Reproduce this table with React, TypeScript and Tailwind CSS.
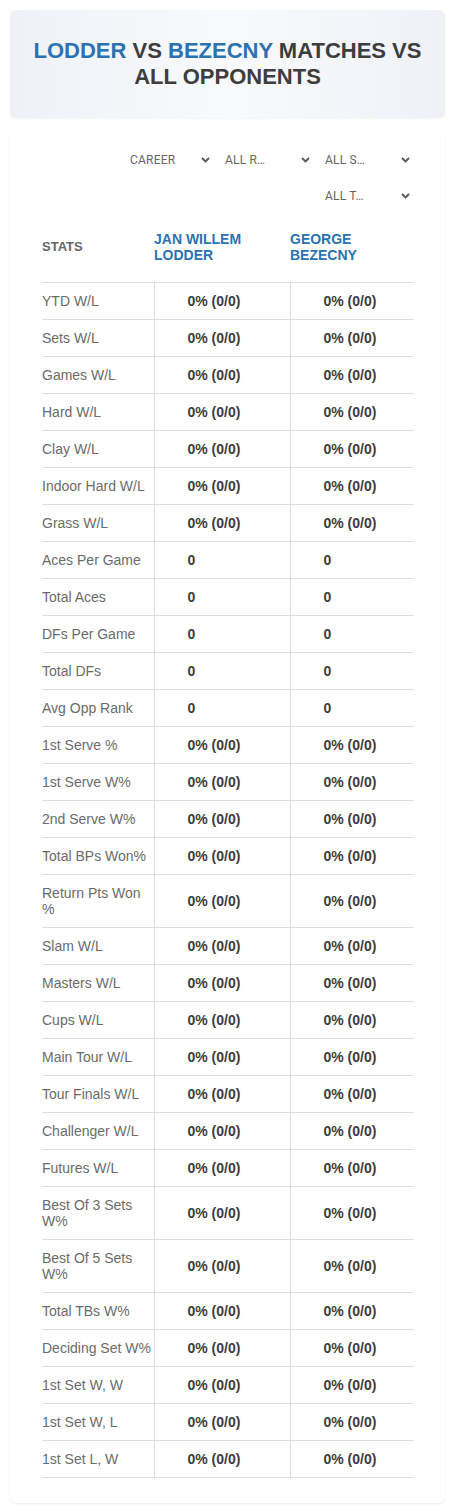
const rows: { label: string; value: string }[] = [
    { label: "YTD W/L", value: "0% (0/0)" },
    { label: "Sets W/L", value: "0% (0/0)" },
    { label: "Games W/L", value: "0% (0/0)" },
    { label: "Hard W/L", value: "0% (0/0)" },
    { label: "Clay W/L", value: "0% (0/0)" },
    { label: "Indoor Hard W/L", value: "0% (0/0)" },
    { label: "Grass W/L", value: "0% (0/0)" },
    { label: "Aces Per Game", value: "0" },
    { label: "Total Aces", value: "0" },
    { label: "DFs Per Game", value: "0" },
    { label: "Total DFs", value: "0" },
    { label: "Avg Opp Rank", value: "0" },
    { label: "1st Serve %", value: "0% (0/0)" },
    { label: "1st Serve W%", value: "0% (0/0)" },
    { label: "2nd Serve W%", value: "0% (0/0)" },
    { label: "Total BPs Won%", value: "0% (0/0)" },
    { label: "Return Pts Won %", value: "0% (0/0)" },
    { label: "Slam W/L", value: "0% (0/0)" },
    { label: "Masters W/L", value: "0% (0/0)" },
    { label: "Cups W/L", value: "0% (0/0)" },
    { label: "Main Tour W/L", value: "0% (0/0)" },
    { label: "Tour Finals W/L", value: "0% (0/0)" },
    { label: "Challenger W/L", value: "0% (0/0)" },
    { label: "Futures W/L", value: "0% (0/0)" },
    { label: "Best Of 3 Sets W%", value: "0% (0/0)" },
    { label: "Best Of 5 Sets W%", value: "0% (0/0)" },
    { label: "Total TBs W%", value: "0% (0/0)" },
    { label: "Deciding Set W%", value: "0% (0/0)" },
    { label: "1st Set W, W", value: "0% (0/0)" },
    { label: "1st Set W, L", value: "0% (0/0)" },
    { label: "1st Set L, W", value: "0% (0/0)" },
];

const Chevron = () => (
    <svg width="9" height="6" viewBox="0 0 9 6" className="shrink-0">
        <path d="M1 1 L4.5 4.5 L8 1" fill="none" stroke="#555" strokeWidth="1.8" />
    </svg>
);

const FilterSelect = ({ text, first }: { text: string; first?: boolean }) => (
    <div
        className={`h-[30px] flex items-center justify-between pl-[12px] pr-[3px] ${first ? "w-[95px]" : "w-[100px]"}`}
    >
        <span className="text-[12px] text-[#666] whitespace-nowrap tracking-[0.2px]">{text}</span>
        <Chevron />
    </div>
);

export default function App() {
    return (
        <div className="min-h-[1512px] bg-white pt-[10px] px-[10px] font-['Liberation_Sans',Arial,sans-serif]">
            {/* title card */}
            <div className="rounded-md bg-gradient-to-r from-[#eef2f7] via-[#f8f9fb] to-[#eef2f7] shadow-[0_1px_2px_rgba(0,0,0,0.05)] px-[16px] py-[28px] h-[108px]">
                <h1 className="text-center text-[22px] leading-[26px] font-bold text-[#3d3d3d] uppercase">
                    <span className="text-[#2b72b2]">Lodder</span> vs{" "}
                    <span className="text-[#2b72b2]">Bezecny</span> Matches vs All Opponents
                </h1>
            </div>

            {/* stats card */}
            <div className="mt-[10px] rounded-md bg-white shadow-[0_1px_2px_rgba(0,0,0,0.08)] pl-[32px] pr-[32px] pt-[17px] pb-[25px]">
                <div className="flex flex-wrap justify-end gap-y-[6px] font-['Roboto',sans-serif]">
                    <FilterSelect text="CAREER" first />
                    <FilterSelect text="ALL R…" />
                    <FilterSelect text="ALL S…" />
                    <FilterSelect text="ALL T…" />
                </div>

                <table className="table-fixed w-[371px] border-collapse">
                    <colgroup>
                        <col className="w-[112px]" />
                        <col className="w-[136px]" />
                        <col className="w-[123px]" />
                    </colgroup>
                    <thead>
                        <tr className="border-b border-[#ddd]">
                            <th className="pt-[20px] pb-[19px] text-left align-middle text-[13px] leading-[16px] font-bold text-[#666]">
                                STATS
                            </th>
                            <th className="pt-[20px] pb-[19px] text-left align-middle text-[14px] leading-[16px] font-bold text-[#2b72b2]">
                                JAN WILLEM
                                <br />
                                LODDER
                            </th>
                            <th className="pt-[20px] pb-[19px] text-left align-middle text-[14px] leading-[16px] font-bold text-[#2b72b2]">
                                GEORGE
                                <br />
                                BEZECNY
                            </th>
                        </tr>
                    </thead>
                    <tbody>
                        {rows.map((r) => (
                            <tr key={r.label} className="border-b border-[#ddd]">
                                <td className="py-[10px] pr-[2px] text-[14px] leading-[16px] text-[#6b6b6b] align-middle">
                                    {r.label}
                                </td>
                                <td className="py-[10px] pl-[33px] border-l border-[#ddd] text-[14px] leading-[16px] font-bold text-[#3d3d3d] align-middle">
                                    {r.value}
                                </td>
                                <td className="py-[10px] pl-[33px] border-l border-[#ddd] text-[14px] leading-[16px] font-bold text-[#3d3d3d] align-middle">
                                    {r.value}
                                </td>
                            </tr>
                        ))}
                    </tbody>
                </table>
            </div>
        </div>
    );
}
